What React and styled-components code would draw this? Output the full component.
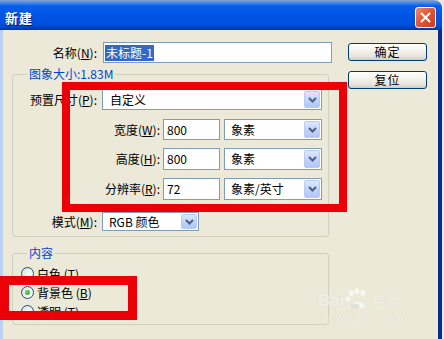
import React from 'react';
import styled, { createGlobalStyle } from 'styled-components';

const GlobalStyle = createGlobalStyle`
  html, body { margin: 0; padding: 0; background: #ECE9D8; }
  body {
    font-family: "Noto Sans CJK SC", "Liberation Sans", sans-serif;
    font-size: 12px;
    color: #000;
  }
  * { box-sizing: border-box; }
`;

const Window = styled.div`
  position: relative;
  width: 442px;
  height: 339px;
  overflow: hidden;
  background: #ECE9D8;
`;

const TitleBar = styled.div`
  height: 30px;
  display: flex;
  justify-content: space-between;
  align-items: flex-start;
  padding: 0 6px 0 5px;
  border-top-right-radius: 8px;
  background: linear-gradient(180deg, #8EA3CC 0px, #3D86F0 3px, #0A5DEB 6px, #0055E5 15px, #0050DD 24px, #0041C4 28px, #0034A8 30px);
`;

const Title = styled.div`
  margin-top: 10px;
  font-size: 13px;
  line-height: 16px;
  font-weight: bold;
  color: #fff;
  text-shadow: 1px 1px 0 #0A1E6E;
  letter-spacing: 1px;
`;

const CloseBtn = styled.div`
  margin-top: 7px;
  width: 21px;
  height: 21px;
  border: 1px solid #fff;
  border-radius: 3px;
  background: linear-gradient(135deg, #F08A6C 0%, #E0573A 45%, #C63D1E 100%);
  display: flex;
  align-items: center;
  justify-content: center;
`;

const Body = styled.div`
  display: flex;
  height: 309px;
  border-left: 3px solid #BCD0F2;
  border-right: 4px solid #0B2A8C;
  padding: 12px 0 0 9px;
`;

const Main = styled.div`
  width: 320px;
  display: flex;
  flex-direction: column;
`;

const Side = styled.div`
  margin-left: 16px;
  margin-top: 1px;
  display: flex;
  flex-direction: column;
  gap: 10px;
`;

const Button = styled.div`
  width: 79px;
  height: 18px;
  border: 1px solid #003C74;
  border-radius: 3px;
  background: linear-gradient(180deg, #FFFFFF 0%, #F4F3EE 40%, #E6E3DA 80%, #CDC8BC 100%);
  box-shadow: inset 0 -1px 0 #D6D0C5;
  display: flex;
  align-items: center;
  justify-content: center;
  font-size: 12px;
  line-height: 14px;
  letter-spacing: 1px;
`;

const Row = styled.div`
  display: flex;
  align-items: center;
  height: ${p => p.$h || 21}px;
  margin-top: ${p => p.$mt || 0}px;
  gap: ${p => p.$gap || 5}px;
`;

const Label = styled.div`
  width: ${p => p.$w}px;
  text-align: right;
  white-space: nowrap;
  line-height: 14px;
`;

const TextBox = styled.div`
  width: ${p => p.$w}px;
  height: 100%;
  background: #fff;
  border: 1px solid #7F9DB9;
  padding: 0 3px;
  display: flex;
  align-items: center;
  line-height: 14px;
`;

const Selected = styled.span`
  background: #316AC5;
  color: #fff;
  padding: 1px 1px;
  margin-left: -2px;
`;

const Select = styled.div`
  width: ${p => p.$w}px;
  height: 100%;
  background: #fff;
  border: 1px solid #7F9DB9;
  display: flex;
  align-items: center;
  justify-content: space-between;
  padding: 1px 1px 1px ${p => p.$pl || 6}px;
  line-height: 14px;
`;

const Arrow = styled.div`
  width: 16px;
  height: 100%;
  border-radius: 2px;
  border: 1px solid #B9CBF3;
  background: linear-gradient(180deg, #DDE7FD 0%, #C3D3FB 50%, #B2C6F7 100%);
  display: flex;
  align-items: center;
  justify-content: center;
`;

const Group = styled.fieldset`
  margin: ${p => p.$mt}px 0 0 0;
  padding: 0;
  width: 317px;
  border: 1px solid #D0D0BF;
  border-radius: 3px;
  min-width: 0;
`;

const Legend = styled.legend`
  margin-left: 14px;
  padding: 0 2px;
  color: #0046D5;
  font-size: 12px;
  line-height: 14px;
`;

const GroupInner = styled.div`
  padding: ${p => p.$pad};
  display: flex;
  flex-direction: column;
`;

const RadioRow = styled.div`
  height: 19px;
  display: flex;
  align-items: center;
  gap: 3px;
  padding-left: 8px;
  line-height: 14px;
`;

const RadioDot = styled.div`
  width: 13px;
  height: 13px;
  border-radius: 50%;
  border: 1px solid #1C5180;
  background: radial-gradient(circle at 65% 65%, #FFFFFF 0%, #F2F1EC 40%, #DCD9CE 100%);
  display: flex;
  align-items: center;
  justify-content: center;
  &::after {
    content: "";
    display: ${p => (p.$on ? 'block' : 'none')};
    width: 5px;
    height: 5px;
    border-radius: 50%;
    background: radial-gradient(circle at 40% 40%, #6CD66C, #21A121);
  }
`;

const Mark = styled.div`
  position: absolute;
  left: ${p => p.$x}px;
  top: ${p => p.$y}px;
  width: ${p => p.$w}px;
  height: ${p => p.$h}px;
  border: ${p => p.$b}px solid #EC0008;
  pointer-events: none;
`;

const Watermark = styled.div`
  position: absolute;
  left: 318px;
  top: 288px;
  color: rgba(255, 255, 255, 0.55);
  font-family: "Liberation Sans", sans-serif;
  text-shadow: 0 0 1px rgba(200, 195, 180, 0.4);
`;

const WmTop = styled.div`
  display: flex;
  align-items: flex-end;
  font-size: 17px;
  line-height: 18px;
  font-weight: bold;
`;

const WmSub = styled.div`
  font-size: 10px;
  line-height: 11px;
  margin-top: 2px;
  letter-spacing: 0.5px;
`;

const WmCn = styled.span`
  font-family: "Noto Sans CJK SC", sans-serif;
  font-size: 13px;
  font-weight: normal;
  margin-left: 2px;
`;

function Chevron() {
  return (
    <svg width="9" height="6" viewBox="0 0 9 6">
      <path d="M1 1 L4.5 4.5 L8 1" fill="none" stroke="#4D6185" strokeWidth="2" />
    </svg>
  );
}

function Dropdown({ w, value, pl }) {
  return (
    <Select $w={w} $pl={pl}>
      <span>{value}</span>
      <Arrow><Chevron /></Arrow>
    </Select>
  );
}

export default function App() {
  return (
    <>
      <GlobalStyle />
      <Window>
        <TitleBar>
          <Title>新建</Title>
          <CloseBtn>
            <svg width="11" height="11" viewBox="0 0 11 11">
              <path d="M1.5 1.5 L9.5 9.5 M9.5 1.5 L1.5 9.5" stroke="#fff" strokeWidth="2" strokeLinecap="round" />
            </svg>
          </CloseBtn>
        </TitleBar>
        <Body>
          <Main>
            <Row $gap={6}>
              <Label $w={85}>名称(<u>N</u>):</Label>
              <TextBox $w={229}><Selected>未标题-1</Selected></TextBox>
            </Row>

            <Group $mt={4}>
              <Legend>图象大小:1.83M</Legend>
              <GroupInner $pad="8px 0 5px 0">
                <Row>
                  <Label $w={84}>预置尺寸(<u>P</u>):</Label>
                  <Dropdown w={220} value="自定义" pl={7} />
                </Row>
                <Row $mt={9} $gap={3}>
                  <Label $w={147}>宽度(<u>W</u>):</Label>
                  <TextBox $w={57}>800</TextBox>
                  <Row $gap={0} style={{ marginLeft: 1 }}><Dropdown w={98} value="象素" /></Row>
                </Row>
                <Row $mt={8} $h={22} $gap={3}>
                  <Label $w={147}>高度(<u>H</u>):</Label>
                  <TextBox $w={57}>800</TextBox>
                  <Row $gap={0} $h={22} style={{ marginLeft: 1 }}><Dropdown w={98} value="象素" /></Row>
                </Row>
                <Row $mt={8} $h={22} $gap={3}>
                  <Label $w={147}>分辨率(<u>R</u>):</Label>
                  <TextBox $w={57}>72</TextBox>
                  <Row $gap={0} $h={22} style={{ marginLeft: 1 }}><Dropdown w={98} value="象素/英寸" /></Row>
                </Row>
                <Row $mt={12} $h={19}>
                  <Label $w={84}>模式(<u>M</u>):</Label>
                  <Dropdown w={97} value="RGB 颜色" />
                </Row>
              </GroupInner>
            </Group>

            <Group $mt={9}>
              <Legend>内容</Legend>
              <GroupInner $pad="4px 0 3px 0">
                <RadioRow><RadioDot /><span>白色 (<u>T</u>)</span></RadioRow>
                <RadioRow><RadioDot $on /><span>背景色 (<u>B</u>)</span></RadioRow>
                <RadioRow><RadioDot /><span>透明 (<u>T</u>)</span></RadioRow>
              </GroupInner>
            </Group>
          </Main>
          <Side>
            <Button>确定</Button>
            <Button>复位</Button>
          </Side>
        </Body>

        <Mark $x={62} $y={82} $w={285} $h={130} $b={8} />
        <Mark $x={0} $y={276} $w={137} $h={44} $b={9} />

        <Watermark>
          <WmTop>
            Bai
            <svg width="26" height="22" viewBox="0 0 26 22">
              <g fill="rgba(255,255,255,0.6)">
                <ellipse cx="7" cy="5" rx="2.5" ry="3" />
                <ellipse cx="13" cy="3" rx="2.5" ry="3" />
                <ellipse cx="19" cy="5" rx="2.5" ry="3" />
                <ellipse cx="4" cy="11" rx="2.2" ry="2.8" />
                <path d="M5 20 C5 12 21 12 21 20 Z" />
              </g>
              <text x="6.5" y="19.5" fontSize="7" fill="#DDD9CB" fontFamily="Liberation Sans">du</text>
            </svg>
            <WmCn>经验</WmCn>
          </WmTop>
          <WmSub>jingyan.baidu.com</WmSub>
        </Watermark>
      </Window>
    </>
  );
}
